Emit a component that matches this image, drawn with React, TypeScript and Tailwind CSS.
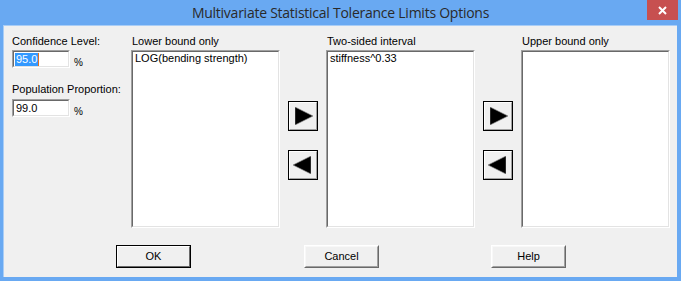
import React from "react";

const font = { fontFamily: '"Liberation Sans", Arial, sans-serif' };

function Sunken({ className = "", children }: { className?: string; children?: React.ReactNode }) {
  return (
    <div className={`border border-t-[#a0a0a0] border-l-[#a0a0a0] border-b-white border-r-white ${className}`}>
      <div className="h-full w-full border border-t-[#696969] border-l-[#696969] border-b-[#e3e3e3] border-r-[#e3e3e3] bg-white">
        {children}
      </div>
    </div>
  );
}

function ArrowBtn({ dir }: { dir: "r" | "l" }) {
  return (
    <div className="h-[30px] w-[30px] border border-black">
      <div className="flex h-full w-full items-center justify-center border border-t-white border-l-white border-b-[#a0a0a0] border-r-[#a0a0a0] bg-[#f0f0f0]">
        <svg width="18" height="18" viewBox="0 0 18 18" className={dir === "r" ? "ml-[2px]" : "mr-[2px]"}>
          {dir === "r" ? (
            <polygon points="0,0 18,9 0,18" fill="#000" stroke="#8a8a8a" strokeWidth="0.6" />
          ) : (
            <polygon points="18,0 0,9 18,18" fill="#000" stroke="#8a8a8a" strokeWidth="0.6" />
          )}
        </svg>
      </div>
    </div>
  );
}

function PushBtn({ label, def = false, className = "" }: { label: string; def?: boolean; className?: string }) {
  if (def) {
    return (
      <div className={`h-[23px] w-[75px] border border-black ${className}`}>
        <div className="flex h-full w-full items-center justify-center border border-t-white border-l-white border-b-[#696969] border-r-[#696969] bg-[#f0f0f0] text-[11px] text-black">
          {label}
        </div>
      </div>
    );
  }
  return (
    <div className={`h-[23px] w-[75px] border border-t-white border-l-white border-b-[#696969] border-r-[#696969] ${className}`}>
      <div className="flex h-full w-full items-center justify-center border border-t-[#f8f8f8] border-l-[#f8f8f8] border-b-[#a0a0a0] border-r-[#a0a0a0] bg-[#f0f0f0] text-[11px] text-black">
        {label}
      </div>
    </div>
  );
}

function ListCol({ label, items }: { label: string; items: string[] }) {
  return (
    <div className="flex w-[149px] flex-col">
      <div className="h-[13px] pl-[1px] text-[11px] leading-[13px] text-black">{label}</div>
      <Sunken className="mt-[2px] h-[178px] w-[149px]">
        <div className="px-[2px]">
          {items.map((it) => (
            <div key={it} className="text-[11px] leading-[13px] text-black">
              {it}
            </div>
          ))}
        </div>
      </Sunken>
    </div>
  );
}

function ArrowCol() {
  return (
    <div className="flex w-[46px] flex-col pl-[8px] pt-[66px]">
      <ArrowBtn dir="r" />
      <div className="mt-[19px]">
        <ArrowBtn dir="l" />
      </div>
    </div>
  );
}

export default function App() {
  return (
    <div className="flex h-[281px] w-[681px] flex-col bg-[#69a9f2]" style={font}>
      <div className="relative flex h-[25px] items-center justify-center">
        <span
          className="pb-[1px] text-[14px] text-[#2a2a2a]"
          style={{ fontFamily: '"Open Sans", "Noto Sans", sans-serif', letterSpacing: "-0.25px" }}
        >
          Multivariate Statistical Tolerance Limits Options
        </span>
        <div className="absolute right-[3px] top-0 flex h-[20px] w-[31px] items-center justify-center bg-[#c75050]">
          <svg width="9" height="9" viewBox="0 0 9 9">
            <path d="M1 1 L8 8 M8 1 L1 8" stroke="#fff" strokeWidth="2" />
          </svg>
        </div>
      </div>
      <div className="mb-[4px] ml-[3px] mr-[4px] flex flex-1 flex-col border-t border-l border-[#a9cdf6] bg-[#f0f0f0] pl-[8px] pt-[9px]">
        <div className="flex items-start">
          <div className="flex w-[119px] flex-col">
            <div className="h-[13px] text-[11px] leading-[13px] text-black">Confidence Level:</div>
            <div className="mt-[2px] flex items-end">
              <Sunken className="h-[18px] w-[58px]">
                <div className="flex h-full items-center pl-[1px]">
                  <span className="bg-[#3399ff] px-[1px] text-[11px] leading-[13px] text-white">95.0</span>
                  <span className="h-[13px] w-px bg-[#e07020]" />
                </div>
              </Sunken>
              <span className="ml-[4px] text-[10px] leading-[11px] text-black">%</span>
            </div>
            <div className="mt-[15px] h-[13px] text-[11px] leading-[13px] text-black">Population Proportion:</div>
            <div className="mt-[3px] flex items-end">
              <Sunken className="h-[18px] w-[58px]">
                <div className="flex h-full items-center pl-[2px] text-[11px] leading-[13px] text-black">99.0</div>
              </Sunken>
              <span className="ml-[4px] text-[10px] leading-[11px] text-black">%</span>
            </div>
          </div>
          <ListCol label="Lower bound only" items={["LOG(bending strength)"]} />
          <ArrowCol />
          <ListCol label="Two-sided interval" items={["stiffness^0.33"]} />
          <ArrowCol />
          <ListCol label="Upper bound only" items={[]} />
        </div>
        <div className="mt-[17px] flex">
          <PushBtn label="OK" def className="ml-[104px]" />
          <PushBtn label="Cancel" className="ml-[113px]" />
          <PushBtn label="Help" className="ml-[112px]" />
        </div>
      </div>
    </div>
  );
}
